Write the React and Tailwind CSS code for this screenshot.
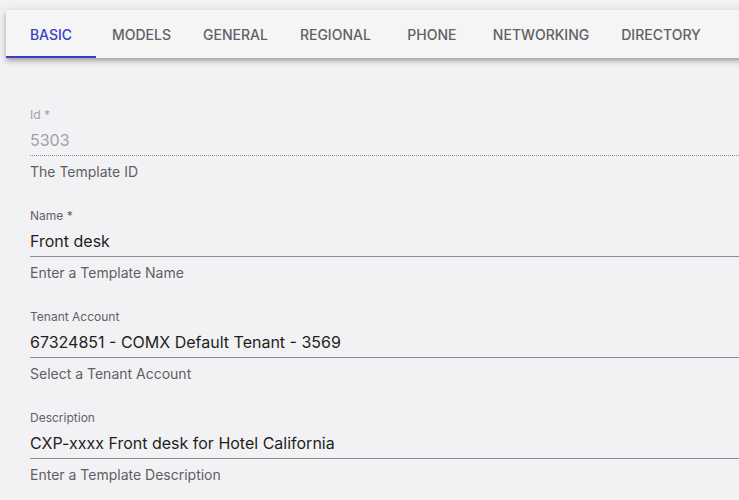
const tabs = ['Basic', 'Models', 'General', 'Regional', 'Phone', 'Networking', 'Directory'];

const fields = [
  { label: 'Id', required: true, value: '5303', helper: 'The Template ID', disabled: true },
  { label: 'Name', required: true, value: 'Front desk', helper: 'Enter a Template Name' },
  {
    label: 'Tenant Account',
    value: '67324851 - COMX Default Tenant - 3569',
    helper: 'Select a Tenant Account',
  },
  {
    label: 'Description',
    value: 'CXP-xxxx Front desk for Hotel California',
    helper: 'Enter a Template Description',
  },
];

const Field = ({ label, required, value, helper, disabled }) => (
  <div className="mb-[26px]">
    <label
      className={`block h-4 text-[12px] leading-4 ${disabled ? 'text-[#a1a1a4]' : 'text-[#616165]'}`}
    >
      {label}
      {required && <span> *</span>}
    </label>
    <div
      className={`mt-[2px] border-b pt-1 pb-[3px] ${
        disabled ? 'border-dotted border-[#8e8e92]' : 'border-solid border-[#8e8e92]'
      }`}
    >
      <div
        className={`h-[23px] text-[16px] leading-[23px] ${
          disabled ? 'text-[#a1a1a4]' : 'text-[#1f1f21]'
        }`}
      >
        {value}
      </div>
    </div>
    <p className="mt-[6px] text-[14px] leading-5 text-[#5f5f63]">{helper}</p>
  </div>
);

export default function App() {
  return (
    <div
      className="min-h-[500px] overflow-hidden bg-[#f2f2f5] pt-[10px] pl-[6px]"
      style={{ fontFamily: 'Inter, "Noto Sans", sans-serif' }}
    >
      <nav className="mr-[-20px] flex h-12 bg-[#f5f5f6] shadow-[0_2px_4px_-1px_rgba(0,0,0,0.2),0_4px_5px_0_rgba(0,0,0,0.14),0_1px_10px_0_rgba(0,0,0,0.12)]">
        {tabs.map((tab, i) => (
          <div
            key={tab}
            className={`relative flex min-w-[90px] items-center justify-center px-4 text-[14px] font-medium uppercase ${
              i === 0 ? 'text-[#3d3dc6]' : 'text-[#616165]'
            }`}
          >
            {tab}
            {i === 0 && <span className="absolute bottom-0 left-0 h-[2px] w-full bg-[#3d3dc6]" />}
          </div>
        ))}
      </nav>

      <form className="pt-[49px] pl-6">
        {fields.map((f) => (
          <Field key={f.label} {...f} />
        ))}
      </form>
    </div>
  );
}
